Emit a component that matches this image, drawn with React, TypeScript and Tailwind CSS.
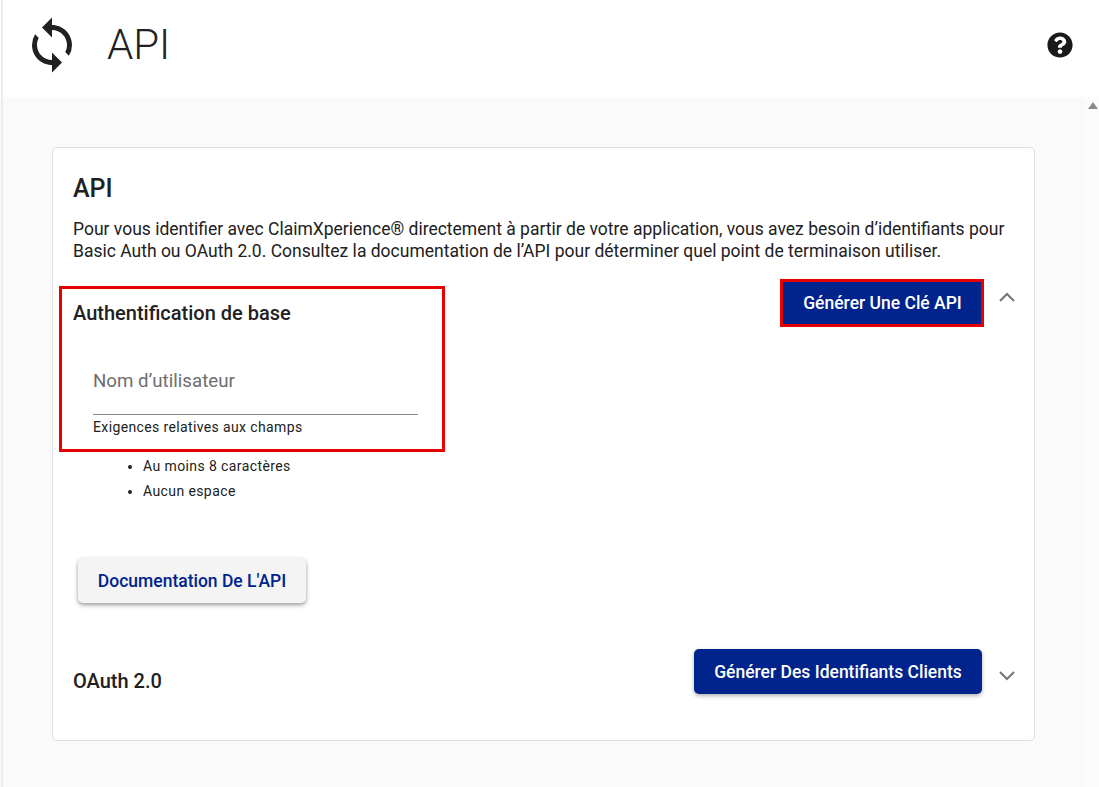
import { MdSync } from "react-icons/md";
import { FaQuestionCircle } from "react-icons/fa";

function Chevron({ up, className }: { up?: boolean; className?: string }) {
  return (
    <svg viewBox="0 0 30 30" className={`w-[30px] h-[30px] text-[#757575] ${className ?? ''}`} fill="none" stroke="currentColor" strokeWidth="2">
      <path d={up ? "M8 19 L15 12 L22 19" : "M8 12 L15 19 L22 12"} />
    </svg>
  );
}

export default function App() {
  return (
    <div className="relative h-[787px] overflow-hidden flex flex-col bg-[#fafafa] text-[#212121] font-['Roboto',sans-serif]">
      <div className="absolute left-[1px] top-0 bottom-0 w-[2px] bg-[#ebebeb]" />
      <header className="h-[97px] shrink-0 bg-white flex items-center pl-[22px] pr-[26px] pb-[7px]">
        <MdSync className="text-[60px] text-[#212121]" />
        <h1 className="ml-[25px] text-[42px] font-light leading-none text-[#212121] flex-1">API</h1>
        <FaQuestionCircle className="text-[26px] text-[#1a1a1a]" />
      </header>

      <div className="flex-1 flex">
        <main className="flex-1 pt-[50px] pl-[52px] pr-[51px]">
          <section className="h-[594px] rounded-[5px] border border-[#e0e0e0] bg-white px-[20px] pt-[27px]">
            <h2 className="text-[25px] font-medium leading-[28px]">API</h2>
            <p className="mt-[15px] text-[17.5px] leading-[22px]">
              Pour vous identifier avec ClaimXperience® directement à partir de votre application, vous avez besoin d’identifiants pour Basic Auth ou OAuth 2.0. Consultez la documentation de l’API pour déterminer quel point de terminaison utiliser.
            </p>

            <div className="relative mt-[20px]">
              <div className="flex justify-between">
                <div>
                  <h3 className="mt-[19px] text-[20px] font-medium leading-[24px]">Authentification de base</h3>
                  <div className="mt-[44px] ml-[20px] w-[325px] h-[46px] border-b border-[#8c8c8c] text-[18.7px] leading-[24px] text-[#6e6e6e]">
                    Nom d’utilisateur
                  </div>
                  <p className="mt-[4px] ml-[20px] text-[14px] leading-[16px] tracking-[0.37px]">Exigences relatives aux champs</p>
                </div>
                <div className="flex items-start -mr-[8px]">
                  <button className="h-[42px] w-[198px] pl-[1px] rounded-none bg-[#00238c] text-white text-[17.5px] font-medium outline-[3px] outline-[#e60000]">
                    Générer Une Clé API
                  </button>
                  <Chevron up className="ml-[11px]" />
                </div>
              </div>
              <div className="absolute left-[-14px] top-[4px] w-[386px] h-[166px] border-[3px] border-[#e60000] pointer-events-none" />
            </div>

            <ul className="mt-[19px] ml-[70px] list-disc pl-0 text-[14px] leading-[25px] tracking-[0.4px]">
              <li>Au moins 8 caractères</li>
              <li>Aucun espace</li>
            </ul>

            <button className="mt-[54px] ml-[5px] block h-[45px] w-[228px] pt-[2px] rounded-[5px] bg-[#f4f4f4] text-[#00238c] text-[17.5px] font-medium shadow-[0_2px_4px_rgba(0,0,0,0.4)]">
              Documentation De L'API
            </button>

            <div className="mt-[46px] flex justify-between">
              <h3 className="mt-[20px] text-[20px] font-medium leading-[24px]">OAuth 2.0</h3>
              <div className="flex items-start -mr-[8px]">
                <button className="h-[45px] w-[288px] pt-[2px] rounded-[5px] bg-[#00238c] text-white text-[17.5px] font-medium shadow-[0_2px_4px_rgba(0,0,0,0.3)]">
                  Générer Des Identifiants Clients
                </button>
                <Chevron className="ml-[10px] mt-[11px]" />
              </div>
            </div>
          </section>
        </main>
        <aside className="w-[13px] shrink-0 bg-[#fcfcfc] flex justify-center pt-[5px]">
          <span className="w-0 h-0 border-x-[5px] border-x-transparent border-b-[7px] border-b-[#8c8c8c]" />
        </aside>
      </div>
    </div>
  );
}
